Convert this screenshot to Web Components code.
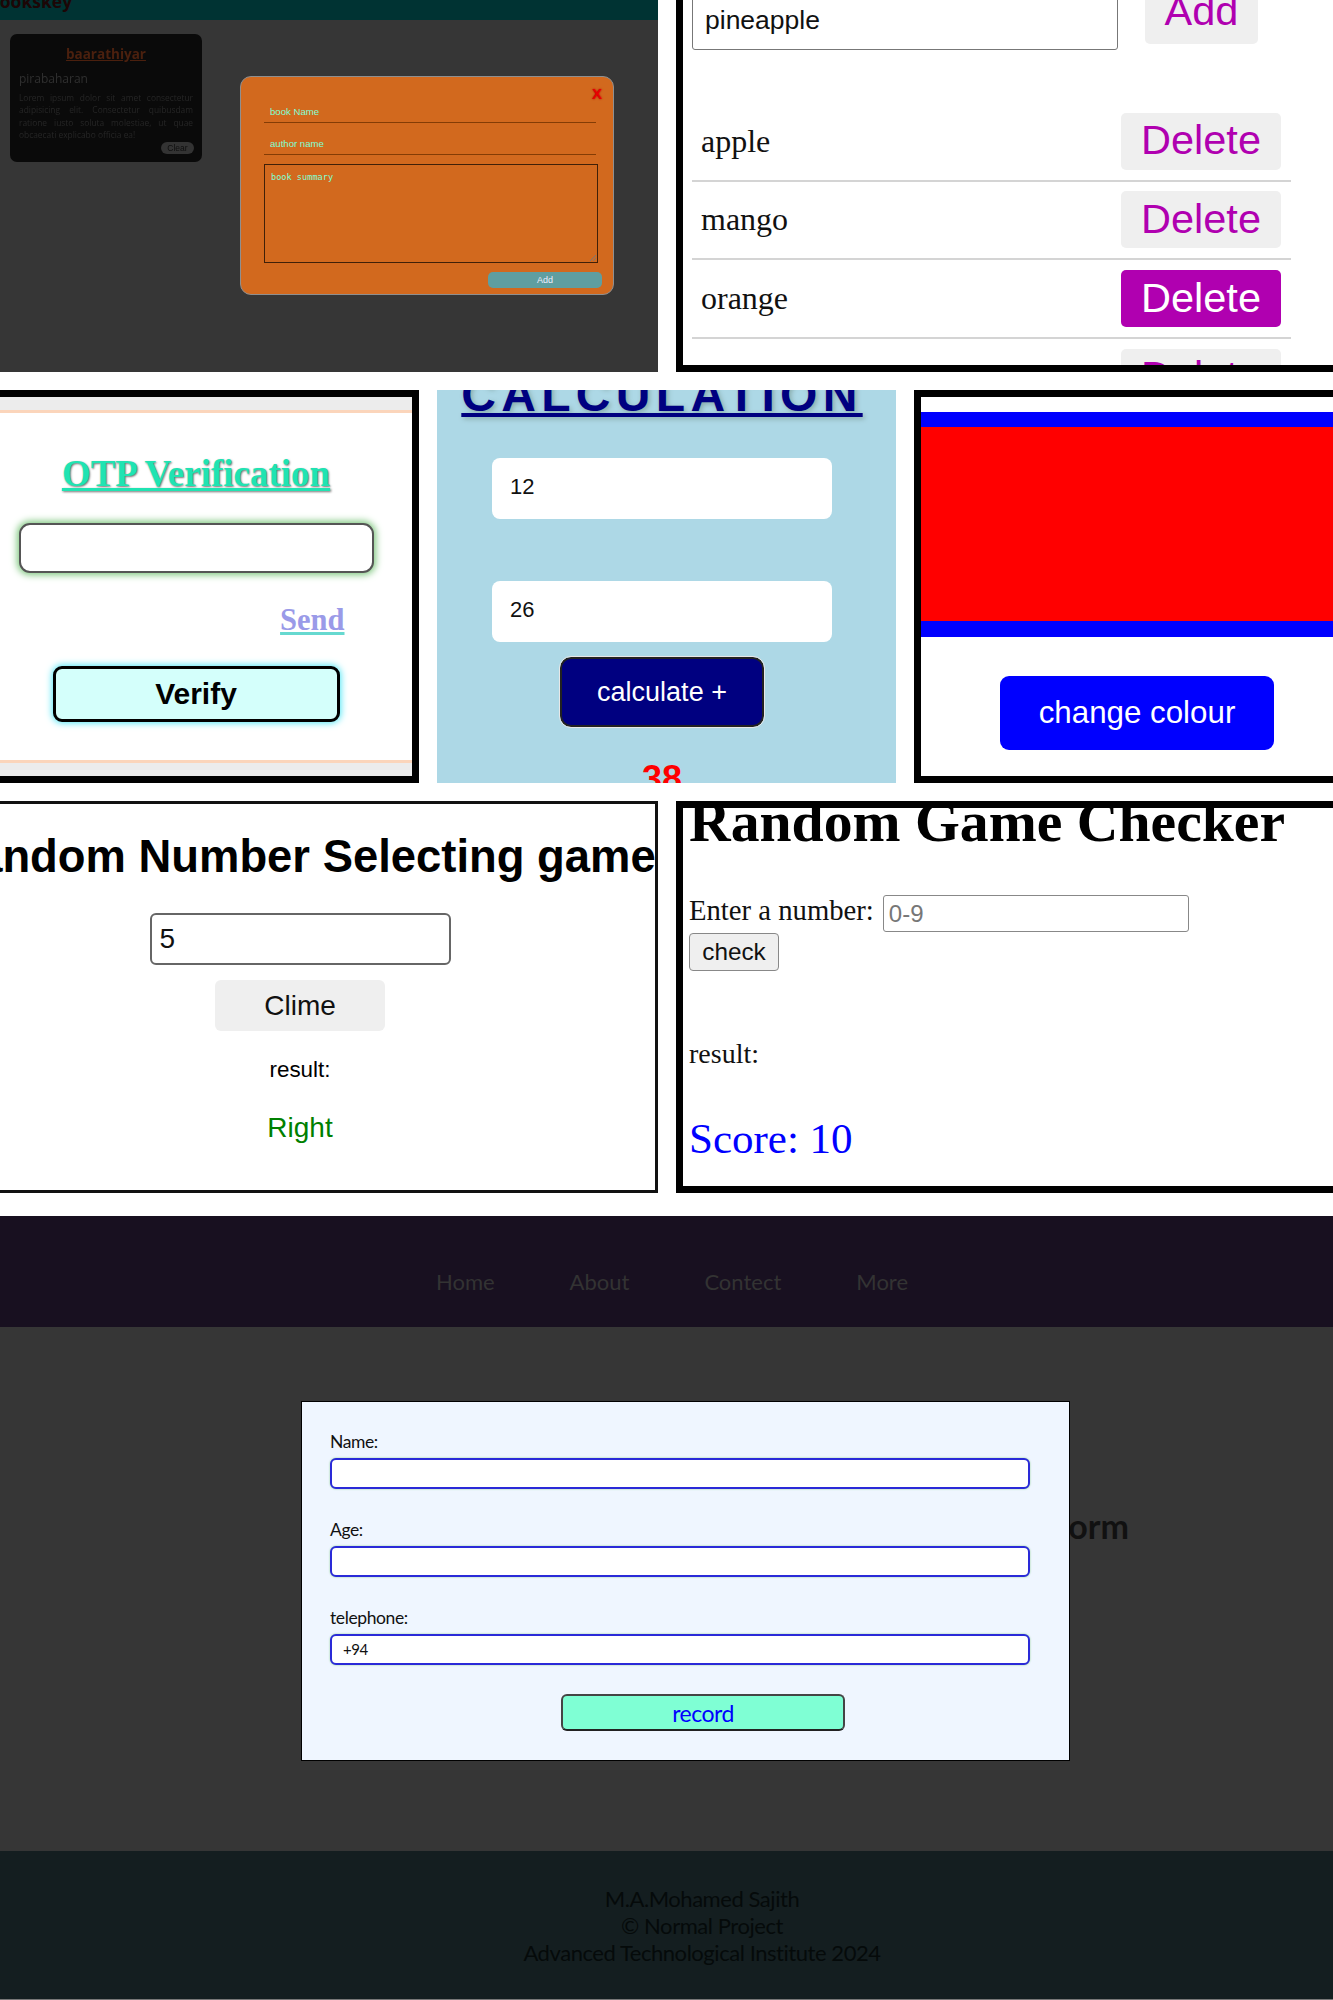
<!DOCTYPE html>
<html>
<head>
<meta charset="utf-8">
<title>Screens</title>
<style>
    body { margin: 0; background: #fff; font-family: "Liberation Sans", Arial, sans-serif; }
</style>
</head>
<body>

<shot-row style="--cols: 658px 1fr; --h: 372px; --after: 18px;">
    <books-panel></books-panel>
    <fruit-list></fruit-list>
</shot-row>
<shot-row style="--cols: 419px 459px 1fr; --h: 393px; --after: 18px;">
    <otp-panel></otp-panel>
    <calc-panel></calc-panel>
    <colour-panel></colour-panel>
</shot-row>
<shot-row style="--cols: 658px 1fr; --h: 392px; --after: 23px;">
    <number-game></number-game>
    <game-checker></game-checker>
</shot-row>
<site-nav></site-nav>
<record-form></record-form>
<site-footer></site-footer>

<script>
    (function screens(customElements) {
        'use strict';

        // every element just stamps its markup into an open shadow root
        function define(tag, markup) {
            customElements.define(tag, class extends HTMLElement {
                constructor() {
                    super();
                    this.attachShadow({ mode: 'open' }).innerHTML = markup;
                }
            });
        }

        define('shot-row', `
            <style>
                :host {
                    display: grid;
                    grid-template-columns: var(--cols);
                    grid-template-rows: var(--h);
                    column-gap: 18px;
                    margin-bottom: var(--after);
                }
            </style>
            <slot></slot>
        `);

        define('books-panel', `
            <style>
                :host {
                    display: block;
                    position: relative;
                    overflow: hidden;
                    background: #363636;
                    font-family: "Open Sans", sans-serif;
                }
                header { height: 20px; background: #003333; overflow: hidden; }
                header b {
                    display: block;
                    margin: -11px 0 0 -12px;
                    font-size: 17.5px;
                    line-height: 24px;
                    color: #1c0606;
                }
                .card {
                    width: 192px;
                    height: 128px;
                    box-sizing: border-box;
                    margin: 14px 0 0 10px;
                    padding: 12px 9px 0;
                    background: #0a0a0a;
                    border-radius: 7px;
                    display: flex;
                    flex-direction: column;
                    filter: blur(.3px);
                }
                h3 {
                    margin: 0;
                    font-size: 13.5px;
                    line-height: 17px;
                    text-align: center;
                    text-decoration: underline;
                    color: #4b200e;
                }
                h4 { margin: 8px 0 0; font-size: 12px; font-weight: 400; line-height: 16px; color: #303030; }
                p {
                    margin: 5px 0 0;
                    font-size: 8.4px;
                    line-height: 12.3px;
                    text-align: justify;
                    color: #262626;
                }
                .clear {
                    align-self: flex-end;
                    margin: 1px -1px 0 0;
                    width: 33px;
                    height: 12px;
                    border-radius: 6px;
                    background: #333;
                    color: #0e0e0e;
                    font: 8.5px/12px "Liberation Sans", sans-serif;
                    text-align: center;
                }
                /* dialog sits on top of the dimmed page */
                .modal {
                    position: absolute;
                    left: 240px;
                    top: 76px;
                    width: 374px;
                    height: 219px;
                    box-sizing: border-box;
                    padding: 14px 15px 0 23px;
                    background: #d2691e;
                    border: 1px solid #8f8f8f;
                    border-radius: 11px;
                    font-family: "Liberation Sans", sans-serif;
                    color: #7fffd4;
                }
                .x {
                    position: absolute;
                    right: 11px;
                    top: 9px;
                    font: bold 15px/16px "Liberation Sans", sans-serif;
                    color: #e80000;
                    text-shadow: 0 0 2px #a00;
                }
                .line {
                    width: 332px;
                    height: 32px;
                    box-sizing: border-box;
                    padding: 0 6px 4px;
                    display: flex;
                    align-items: flex-end;
                    border-bottom: 1px solid #843c05;
                    font-size: 9.6px;
                    line-height: 13px;
                }
                .line + .line { margin-bottom: 9px; }
                .area {
                    width: 334px;
                    height: 99px;
                    box-sizing: border-box;
                    padding: 6px 6px;
                    border: 1px solid #402008;
                    position: relative;
                    font: 8.6px/12px "DejaVu Sans Mono", "Liberation Mono", monospace;
                }
                .area svg { position: absolute; right: 1px; bottom: 1px; }
                .add {
                    width: 114px;
                    height: 16px;
                    margin: 9px 0 0 224px;
                    background: #5f9ea0;
                    border-radius: 5px;
                    color: #eef;
                    font-size: 9px;
                    line-height: 16px;
                    text-align: center;
                }
            </style>
            <header><b>Bookskey</b></header>
            <div class="card">
                <h3>baarathiyar</h3>
                <h4>pirabaharan</h4>
                <p>Lorem ipsum dolor sit amet consectetur adipisicing elit. Consectetur quibusdam ratione iusto soluta molestiae, ut quae obcaecati explicabo officia ea!</p>
                <div class="clear">Clear</div>
            </div>
            <div class="modal">
                <div class="x">X</div>
                <div class="line">book Name</div>
                <div class="line">author name</div>
                <div class="area">book summary
                    <svg width="6" height="6" viewBox="0 0 6 6"><path d="M0 6L6 0M3 6L6 3" stroke="#777" stroke-width="1"/></svg>
                </div>
                <div class="add">Add</div>
            </div>
        `);

        define('fruit-list', `
            <style>
                :host {
                    display: block;
                    overflow: hidden;
                    box-sizing: border-box;
                    border-left: 7px solid #000;
                    border-bottom: 7px solid #000;
                    background: #fff;
                }
                .top { display: flex; align-items: flex-start; height: 60px; margin: -10px 0 0 9px; }
                .field {
                    flex: none;
                    width: 426px;
                    height: 60px;
                    box-sizing: border-box;
                    padding: 0 12px;
                    display: flex;
                    align-items: center;
                    border: 1px solid #777;
                    border-radius: 3px;
                    font-size: 26.5px;
                    color: #111;
                    line-height: 40px;
                }
                button {
                    border: 0;
                    border-radius: 5px;
                    background: #efefef;
                    color: #b000b0;
                    font: 41.5px "Liberation Sans", sans-serif;
                    padding: 0 0 2px;
                    margin: 0;
                }
                .top button { flex: none; width: 113px; height: 60px; margin: -6px 0 0 27px; padding: 0 0 6px; }
                ul { list-style: none; margin: 53px 0 0 9px; padding: 0; width: 599px; }
                li {
                    display: flex;
                    align-items: center;
                    justify-content: space-between;
                    padding: 0 10px 0 9px;
                    box-sizing: border-box;
                    height: 78.67px;
                    border-bottom: 2px solid #d4d4d4;
                }
                li span { font: 32px "Liberation Serif", serif; color: #111; }
                li button { width: 160px; height: 57px; }
                .on { background: #b000b0; color: #fff; }
            </style>
            <div class="top">
                <div class="field">pineapple</div>
                <button>Add</button>
            </div>
            <ul>
                <li><span>apple</span><button>Delete</button></li>
                <li><span>mango</span><button>Delete</button></li>
                <li><span>orange</span><button class="on">Delete</button></li>
                <li><span></span><button>Delete</button></li>
            </ul>
        `);

        define('otp-panel', `
            <style>
                :host {
                    display: block;
                    overflow: hidden;
                    box-sizing: border-box;
                    border: 7px solid #000;
                    border-left: 0;
                    background: #ececec;
                }
                .sheet {
                    margin: 13px 0;
                    height: 353px;
                    box-sizing: border-box;
                    padding-right: 20px;
                    background: #fff;
                    border-top: 3px solid #fbd5bb;
                    border-bottom: 3px solid #fbd5bb;
                    display: flex;
                    flex-direction: column;
                    align-items: center;
                }
                .sheet > * { flex: none; }
                h1 {
                    margin: 39px 0 0;
                    font: bold 37px/44px "Liberation Serif", serif;
                    color: #20e3b2;
                    text-decoration: underline;
                    text-shadow: 1px 1px 2px #777;
                }
                input {
                    width: 355px;
                    height: 50px;
                    box-sizing: border-box;
                    margin: 27px 0 0;
                    border: 2px solid #555;
                    border-radius: 11px;
                    background: #fff;
                    box-shadow: 0 0 7px 2px #7fc77f;
                }
                .send {
                    width: 355px;
                    box-sizing: border-box;
                    margin-top: 29px;
                    padding-right: 29px;
                    text-align: right;
                    font: bold 30.5px/36px "Liberation Serif", serif;
                    color: #9a9ae8;
                }
                .send span { text-decoration: underline; text-decoration-color: #66d9d0; }
                button {
                    width: 287px;
                    height: 56px;
                    margin-top: 28px;
                    border: 3px solid #000;
                    border-radius: 9px;
                    background: #d4fffb;
                    box-shadow: 0 0 7px 1px #4fe6f5;
                    color: #000;
                    font: bold 30px "Liberation Sans", sans-serif;
                }
            </style>
            <div class="sheet">
                <h1>OTP Verification</h1>
                <input type="text">
                <div class="send"><span>Send</span></div>
                <button>Verify</button>
            </div>
        `);

        define('calc-panel', `
            <style>
                :host {
                    display: flex;
                    flex-direction: column;
                    align-items: center;
                    overflow: hidden;
                    padding-right: 9px;
                    box-sizing: border-box;
                    background: #add8e6;
                }
                h1, .num, button, .res { flex: none; }
                h1 {
                    margin: -19px 0 0;
                    font: bold 48px/48px "Liberation Sans", sans-serif;
                    letter-spacing: 5.3px;
                    color: #000080;
                    text-decoration: underline;
                    text-decoration-thickness: 4px;
                    text-shadow: 2px 2px 5px #8aa;
                    white-space: nowrap;
                }
                .num {
                    width: 340px;
                    height: 61px;
                    box-sizing: border-box;
                    margin-top: 39px;
                    padding: 0 18px 3px;
                    display: flex;
                    align-items: center;
                    background: #fff;
                    border-radius: 8px;
                    font-size: 22px;
                    color: #111;
                }
                .num + .num { margin-top: 62px; }
                button {
                    width: 204px;
                    height: 70px;
                    margin-top: 15px;
                    border: 2px solid #222;
                    outline: 1px solid #e8e8e8;
                    border-radius: 11px;
                    background: #000080;
                    color: #fff;
                    font: 27px "Liberation Sans", sans-serif;
                }
                .res {
                    margin-top: 31px;
                    font: bold 36px/41px "Liberation Sans", sans-serif;
                    color: #f00;
                }
            </style>
            <h1>CALCULATION</h1>
            <div class="num">12</div>
            <div class="num">26</div>
            <button>calculate +</button>
            <div class="res">38</div>
        `);

        define('colour-panel', `
            <style>
                :host {
                    display: block;
                    overflow: hidden;
                    box-sizing: border-box;
                    border: 7px solid #000;
                    border-right: 0;
                    background: #fff;
                }
                .box {
                    height: 194px;
                    margin-top: 15px;
                    background: #f00;
                    border-top: 15px solid #00f;
                    border-bottom: 16px solid #00f;
                }
                button {
                    display: block;
                    width: 274px;
                    height: 74px;
                    margin: 39px 0 0 79px;
                    border: 0;
                    border-radius: 9px;
                    background: #00f;
                    color: #fff;
                    font: 31.3px "Liberation Sans", sans-serif;
                }
            </style>
            <div class="box"></div>
            <button>change colour</button>
        `);

        define('number-game', `
            <style>
                :host {
                    display: block;
                    overflow: hidden;
                    box-sizing: border-box;
                    border: 3px solid #111;
                    border-left: 0;
                    background: #fff;
                }
                .col { width: 600px; display: flex; flex-direction: column; align-items: center; }
                .head {
                    width: 100%;
                    margin-top: 27px;
                    display: flex;
                    justify-content: center;
                    white-space: nowrap;
                }
                h1 { flex: none; margin: 0; font: bold 45.4px/52px "Liberation Sans", sans-serif; color: #000; }
                .field {
                    width: 301px;
                    height: 52px;
                    box-sizing: border-box;
                    margin-top: 30px;
                    padding: 0 8px;
                    display: flex;
                    align-items: center;
                    border: 2px solid #666;
                    border-radius: 6px;
                    font-size: 28px;
                    color: #111;
                }
                button {
                    width: 170px;
                    height: 51px;
                    margin-top: 15px;
                    border: 0;
                    border-radius: 6px;
                    background: #efefef;
                    color: #111;
                    font: 28px "Liberation Sans", sans-serif;
                }
                .res { margin-top: 26px; font-size: 22.4px; line-height: 26px; color: #000; }
                .ok { margin-top: 29px; font-size: 28px; line-height: 32px; color: #008000; }
            </style>
            <div class="col">
                <div class="head"><h1>Random Number Selecting game</h1></div>
                <div class="field">5</div>
                <button>Clime</button>
                <div class="res">result:</div>
                <div class="ok">Right</div>
            </div>
        `);

        define('game-checker', `
            <style>
                :host {
                    display: block;
                    overflow: hidden;
                    box-sizing: border-box;
                    border: 7px solid #000;
                    border-right: 0;
                    padding-left: 6px;
                    background: #fff;
                    font-family: "Liberation Serif", serif;
                    color: #111;
                }
                h1 { margin: -15px 0 0; font: bold 57.7px/58px "Liberation Serif", serif; color: #000; white-space: nowrap; }
                .ask { display: flex; align-items: center; height: 37px; margin-top: 44px; }
                .ask span { font-size: 28.7px; line-height: 31px; margin-bottom: 6px; }
                .field {
                    width: 306px;
                    height: 37px;
                    box-sizing: border-box;
                    margin-left: 9px;
                    padding: 0 5px;
                    display: flex;
                    align-items: center;
                    border: 1.5px solid #888;
                    border-radius: 3px;
                    font: 24px "Liberation Sans", sans-serif;
                    color: #777;
                }
                button {
                    display: block;
                    width: 90px;
                    height: 38px;
                    margin-top: 1px;
                    padding: 0;
                    border: 1.5px solid #888;
                    border-radius: 4px;
                    background: #efefef;
                    color: #111;
                    font: 24.3px "Liberation Sans", sans-serif;
                }
                .res { margin-top: 67px; font-size: 28px; line-height: 32px; }
                .score { margin: 45px 0 0 0; font-size: 43px; line-height: 48px; color: #00f; }
            </style>
            <h1>Random Game Checker</h1>
            <div class="ask"><span>Enter a number:</span><div class="field">0-9</div></div>
            <button>check</button>
            <div class="res">result:</div>
            <div class="score">Score: 10</div>
        `);

        define('site-nav', `
            <style>
                :host {
                    display: flex;
                    justify-content: center;
                    align-items: center;
                    gap: 75px;
                    height: 111px;
                    box-sizing: border-box;
                    padding: 20px 0 0 11px;
                    background: #181020;
                    font: 22px Lato, sans-serif;
                    color: #333;
                }
                a { color: inherit; text-decoration: none; }
            </style>
            <a>Home</a><a>About</a><a>Contect</a><a>More</a>
        `);

        define('record-form', `
            <style>
                :host {
                    display: grid;
                    height: 524px;
                    background: #363636;
                    font-family: Lato, sans-serif;
                }
                h2 {
                    grid-area: 1 / 1;
                    justify-self: end;
                    align-self: start;
                    margin: 179px 204px 0 0;
                    font: 700 34px/40px Lato, sans-serif;
                    color: #111;
                }
                form {
                    grid-area: 1 / 1;
                    justify-self: start;
                    align-self: start;
                    width: 769px;
                    height: 360px;
                    box-sizing: border-box;
                    margin: 74px 0 0 301px;
                    padding: 30px 0 0 28px;
                    background: #eff6ff;
                    border: 1px solid #000;
                }
                label { display: block; font-size: 17.5px; line-height: 20px; color: #111; letter-spacing: -.4px; }
                .in {
                    display: block;
                    width: 700px;
                    height: 31px;
                    box-sizing: border-box;
                    margin: 6px 0 31px;
                    padding: 0 11px;
                    border: 2px solid #2a2ad8;
                    border-radius: 6px;
                    background: #fff;
                    box-shadow: 0 0 2px #8c8;
                    font-size: 15px;
                    line-height: 27px;
                    color: #111;
                    letter-spacing: -.5px;
                }
                button {
                    display: block;
                    width: 284px;
                    height: 37px;
                    margin: -2px 0 0 231px;
                    border: 2px solid #444;
                    border-bottom-color: #222;
                    border-radius: 6px;
                    background: #7fffd4;
                    color: #00f;
                    font: 23px Lato, sans-serif;
                    letter-spacing: -.5px;
                }
            </style>
            <h2>Form</h2>
            <form onsubmit="return false">
                <label>Name:</label><div class="in"></div>
                <label>Age:</label><div class="in"></div>
                <label>telephone:</label><div class="in">+94</div>
                <button>record</button>
            </form>
        `);

        define('site-footer', `
            <style>
                :host {
                    display: block;
                    height: 149px;
                    box-sizing: border-box;
                    padding: 34px 0 0 71px;
                    background: #141e20;
                    border-bottom: 1px solid #777;
                    font: 22px/27px Lato, sans-serif;
                    color: #050a0a;
                    text-align: center;
                    letter-spacing: -.45px;
                }
            </style>
            M.A.Mohamed Sajith<br>
            © Normal Project<br>
            Advanced Technological Institute 2024
        `);

    })(window.customElements);
</script>
</body>
</html>
